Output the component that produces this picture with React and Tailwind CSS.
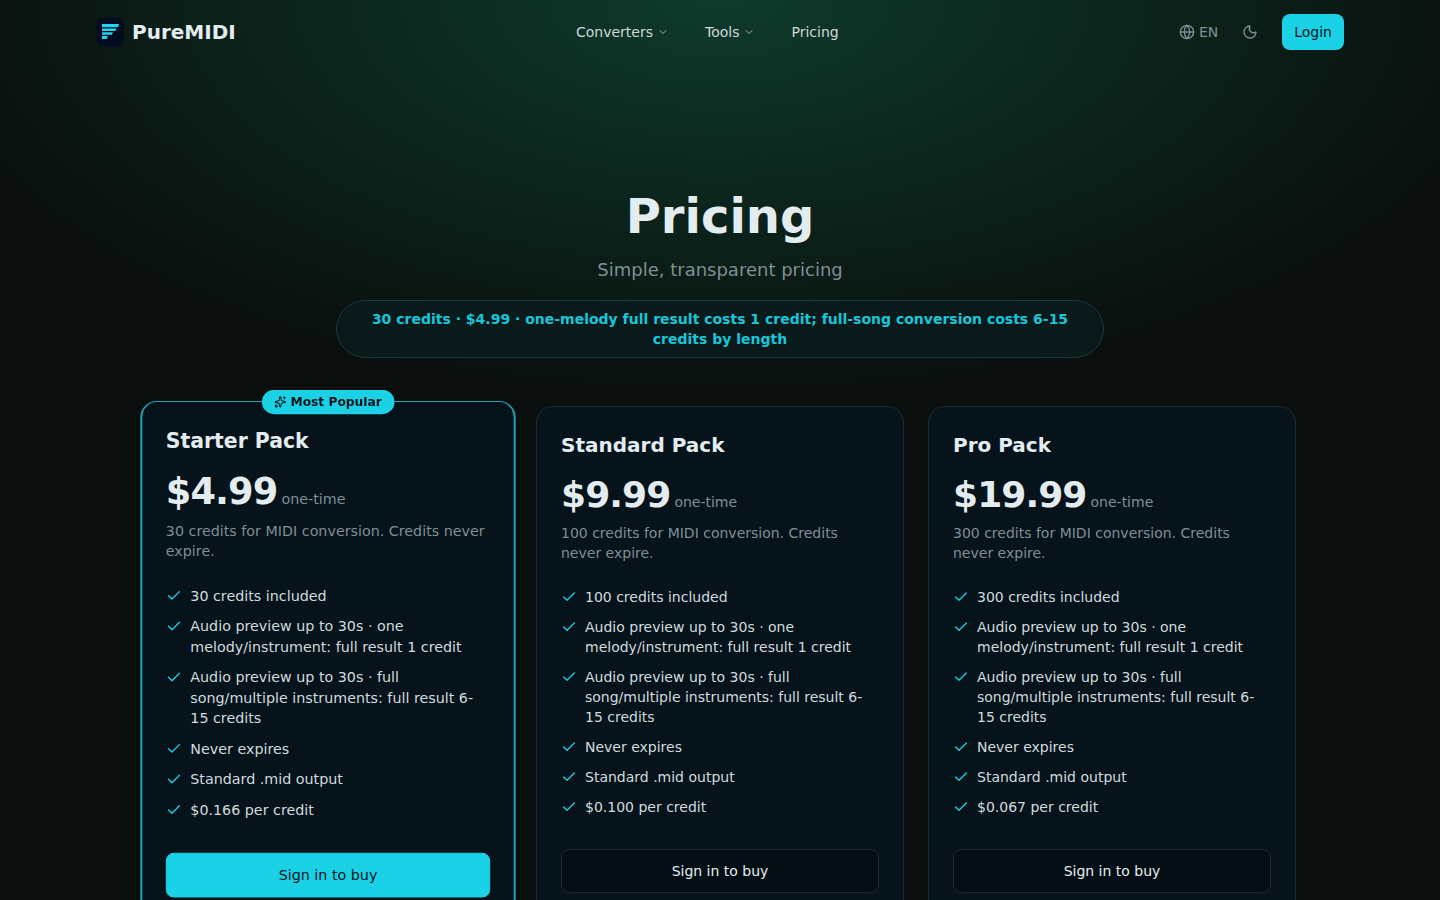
import { Check, ChevronDown, Globe, Moon, Sparkles } from "lucide-react";

const plans = [
  { name: "Starter Pack", price: "$4.99", desc: "30 credits for MIDI conversion. Credits never expire.", credits: "30 credits included", per: "$0.166 per credit", popular: true },
  { name: "Standard Pack", price: "$9.99", desc: "100 credits for MIDI conversion. Credits never expire.", credits: "100 credits included", per: "$0.100 per credit" },
  { name: "Pro Pack", price: "$19.99", desc: "300 credits for MIDI conversion. Credits never expire.", credits: "300 credits included", per: "$0.067 per credit" },
];

function Logo() {
  return (
    <div className="flex h-7 w-7 items-center justify-center rounded-lg bg-[#020c1e]">
      <svg width="18" height="18" viewBox="0 0 18 18" fill="#22d3ee">
        <path d="M1 1h17l-.9 3.2H1z" />
        <path d="M1 5.4h14.4l-.9 2.7H1z" />
        <path d="M1 9.2h10.9l-.9 2.6H1z" />
        <path d="M1 13h5.8l-.8 3H1z" />
      </svg>
    </div>
  );
}

function Card({ plan }) {
  const features = [
    plan.credits,
    "Audio preview up to 30s · one melody/instrument: full result 1 credit",
    "Audio preview up to 30s · full song/multiple instruments: full result 6-15 credits",
    "Never expires",
    "Standard .mid output",
    plan.per,
  ];
  return (
    <div className={`relative rounded-2xl border bg-[#06131b] py-6 ${plan.popular ? "scale-[1.02] border-x-2 border-[#1aa3b4] px-[23px]" : "border-[#1b2a33] px-6"}`}>
      {plan.popular && (
        <div className="absolute -top-3 left-1/2 flex h-6 -translate-x-1/2 items-center gap-1 rounded-full bg-[#1ad1e5] px-3 text-xs font-semibold whitespace-nowrap text-[#04141c]">
          <Sparkles size={12} />
          Most Popular
        </div>
      )}
      <h3 className="text-xl leading-7 font-semibold text-[#e3edf0]">{plan.name}</h3>
      <div className="mt-4 flex items-baseline gap-1">
        <span className="text-4xl leading-10 font-bold tracking-tight text-[#e3edf0]">{plan.price}</span>
        <span className="text-sm text-[#7f8f96]">one-time</span>
      </div>
      <p className="mt-2 text-sm leading-5 text-[#7f8f96]">{plan.desc}</p>
      <ul className="mt-6 flex flex-col gap-2.5">
        {features.map((f) => (
          <li key={f} className="flex gap-2 text-sm leading-5 text-[#d0dbde]">
            <Check size={16} strokeWidth={2} className="mt-0.5 shrink-0 text-[#1ad1e5]" />
            <span>{f}</span>
          </li>
        ))}
      </ul>
      <button className={`mt-8 flex h-11 w-full items-center justify-center rounded-lg border text-sm ${plan.popular ? "border-[#1ad1e5] bg-[#1ad1e5] text-[#04141c]" : "border-[#1b2a33] bg-[#030e15] text-[#e3edf0]"}`}>
        Sign in to buy
      </button>
    </div>
  );
}

export default function App() {
  return (
    <div className="h-[900px] overflow-hidden bg-[#0a0f0d] bg-[radial-gradient(ellipse_820px_400px_at_50%_0%,#0e3a2c_0%,#0a0f0d_100%)] font-['DejaVu_Sans',sans-serif]">
      <header className="mx-auto flex h-16 max-w-7xl items-center justify-between px-4">
        <div className="flex items-center gap-2">
          <Logo />
          <span className="text-xl font-bold text-[#e3edf0]">PureMIDI</span>
        </div>
        <nav className="flex items-center gap-9 text-sm text-[#cdd9da]">
          <span className="flex items-center gap-1">Converters <ChevronDown size={12} className="text-[#9fb0b3]" /></span>
          <span className="flex items-center gap-1">Tools <ChevronDown size={12} className="text-[#9fb0b3]" /></span>
          <span>Pricing</span>
        </nav>
        <div className="flex items-center gap-4">
          <span className="flex items-center gap-1 text-sm text-[#7f8f96]"><Globe size={16} />EN</span>
          <span className="flex h-8 w-8 items-center justify-center text-[#7f8f96]"><Moon size={16} /></span>
          <button className="h-9 rounded-lg bg-[#1ad1e5] px-3 text-sm text-[#04141c]">Login</button>
        </div>
      </header>
      <main className="mx-auto max-w-6xl pt-[128px]">
        <h1 className="text-center text-5xl leading-none font-bold text-[#e3edf0]">Pricing</h1>
        <p className="mt-[16px] text-center text-lg leading-7 text-[#7f8f96]">Simple, transparent pricing</p>
        <div className="mx-auto mt-4 max-w-3xl rounded-full border border-[#123a3f] bg-[#0a1a1b] px-6 py-2 text-center text-sm leading-5 font-semibold text-[#18c6d9]">
          30 credits · $4.99 · one-melody full result costs 1 credit; full-song conversion costs 6-15 credits by length
        </div>
        <div className="mt-12 grid grid-cols-3 gap-6">
          {plans.map((p) => <Card key={p.name} plan={p} />)}
        </div>
      </main>
    </div>
  );
}
